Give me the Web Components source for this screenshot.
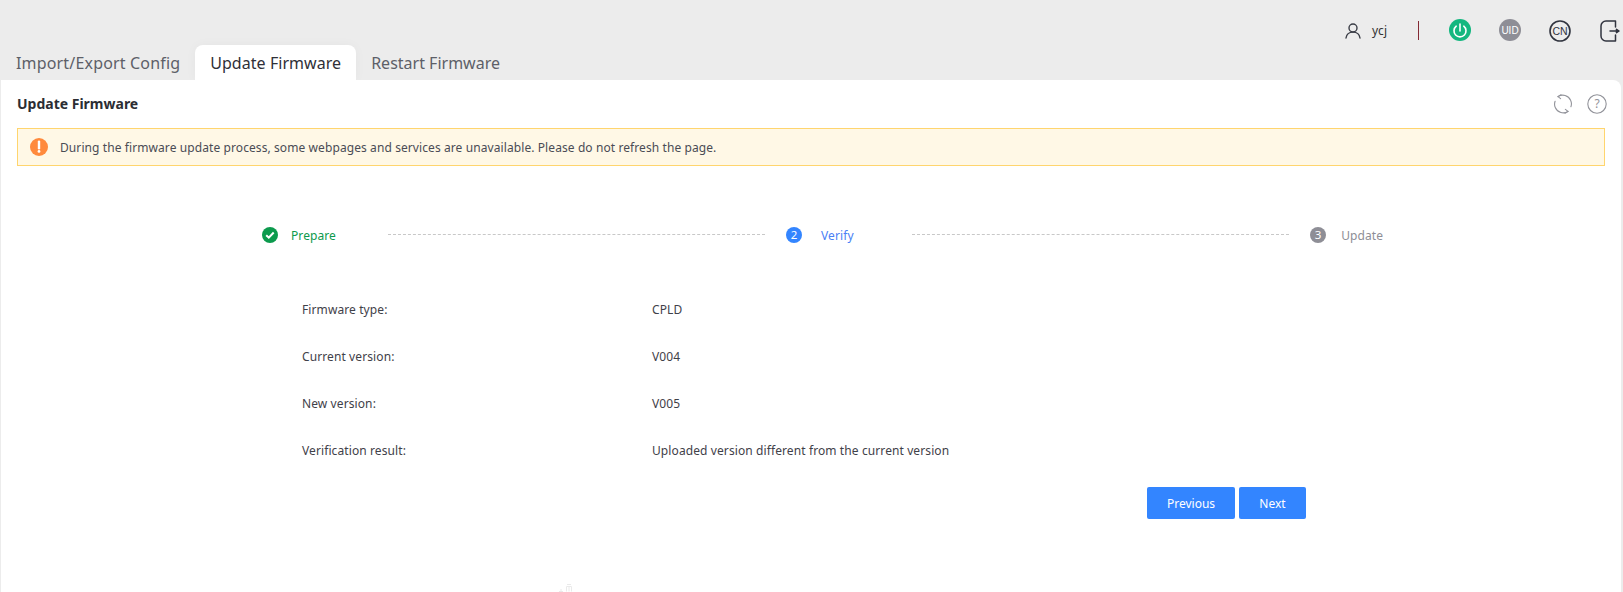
<!DOCTYPE html>
<html lang="en"><head><meta charset="utf-8"><title>Update Firmware</title>
<style>
html,body{margin:0;height:100%;overflow:hidden;background:#ececec}
body{font-family:"Noto Sans","Noto Sans CJK SC",sans-serif;font-size:12px;color:#333}
</style></head><body>
<fw-app>
  <fw-topbar slot="top" user="ycj"></fw-topbar>
  <fw-tabs slot="tabs">
    <fw-tab style="letter-spacing:.17px">Import/Export Config</fw-tab>
    <fw-tab active style="letter-spacing:.05px">Update Firmware</fw-tab>
    <fw-tab style="letter-spacing:0">Restart Firmware</fw-tab>
  </fw-tabs>
  <fw-card title="Update Firmware" slot="card">
    <fw-alert>During the firmware update process, some webpages and services are unavailable. Please do not refresh the page.</fw-alert>
    <fw-stepper>
      <fw-step state="done">Prepare</fw-step>
      <fw-step state="active" num="2">Verify</fw-step>
      <fw-step state="todo" num="3">Update</fw-step>
    </fw-stepper>
    <fw-info>
      <fw-row label="Firmware type:">CPLD</fw-row>
      <fw-row label="Current version:">V004</fw-row>
      <fw-row label="New version:">V005</fw-row>
      <fw-row label="Verification result:">Uploaded version different from the current version</fw-row>
    </fw-info>
    <fw-actions>
      <fw-btn style="width:88px">Previous</fw-btn>
      <fw-btn style="width:67px">Next</fw-btn>
    </fw-actions>
  </fw-card>
</fw-app>
<script>
function def(name,html){
  customElements.define(name,class extends HTMLElement{
    connectedCallback(){
      if(this.shadowRoot)return;
      const r=this.attachShadow({mode:"open"});
      r.innerHTML=typeof html==="function"?html(this):html;
    }
  });
}
def("fw-app",`<style>:host{display:flex;flex-direction:column;height:592px;width:1623px;overflow:hidden}
::slotted([slot=card]){flex:1}</style><slot name="top"></slot><slot name="tabs"></slot><slot name="card"></slot>`);

def("fw-topbar",h=>`<style>
:host{display:flex;height:45px;box-sizing:border-box;align-items:flex-start;justify-content:flex-end;padding:19px 0 0}
.i{display:flex;align-items:center;height:22px}
svg{display:block}
.name{margin-left:11px;font-size:12px;color:#333;width:17px}
.sep{width:1px;height:19px;background:#842a34;margin:0 30px 0 29px}
</style>
<div class="i"><svg width="16" height="16" viewBox="0 0 16 16" fill="none" stroke="#3a3d46" stroke-width="1.4" stroke-linecap="round" style="margin-top:2px"><circle cx="8" cy="5" r="4"/><path d="M1 15c.5-3.600 3-5.900 7-5.900s6.500 2.300 7 5.900"/></svg>
<span class="name">${h.getAttribute("user")}</span></div>
<div class="i"><span class="sep"></span></div>
<div class="i"><svg width="22" height="22" viewBox="0 0 22 22" fill="none"><circle cx="11" cy="11" r="11" fill="#13b77f"/><path d="M11 5v7" stroke="#fff" stroke-width="1.6" stroke-linecap="round"/><path d="M7.200 7.200a6 6 0 1 0 7.600 0" stroke="#fff" stroke-width="1.600" stroke-linecap="round"/></svg></div>
<div class="i" style="margin-left:28px"><svg width="22" height="22" viewBox="0 0 22 22"><circle cx="11" cy="11" r="11" fill="#8e8e96"/><text x="11" y="14.600" text-anchor="middle" font-family="Liberation Sans,sans-serif" font-size="10" fill="#fff">UID</text></svg></div>
<div class="i" style="margin-left:28px"><svg width="22" height="22" viewBox="0 0 22 22" style="margin-top:1px"><circle cx="11" cy="11" r="10" fill="none" stroke="#31343f" stroke-width="1.600"/><text x="11" y="14.600" text-anchor="middle" font-family="Liberation Sans,sans-serif" font-size="10.500" fill="#31343f">CN</text></svg></div>
<div class="i" style="margin:0 3px 0 29px"><svg width="20" height="22" viewBox="0 0 20 22" fill="none" stroke="#31343f" stroke-width="1.500" stroke-linecap="round" stroke-linejoin="round" style="margin-top:1px"><path d="M15.500 7V1H6A5 5 0 0 0 1 6v10a5 5 0 0 0 5 5h9.500v-6"/><path d="M10 11h8"/><path d="M16.500 9.300 19 11l-2.500 1.700z" fill="#31343f"/></svg></div>`);

def("fw-tabs",`<style>:host{display:flex;height:35px;padding-left:1px;align-items:stretch}</style><slot></slot>`);
def("fw-tab",h=>`<style>
:host{display:block;box-sizing:border-box;padding:1px 15px 0;font-size:16px;line-height:35px;color:#5d5f68;white-space:nowrap}
:host([active]){background:#fff;color:#2f3038;border-radius:8px 8px 0 0;box-shadow:0 0 12px rgba(0,0,0,.035)}
</style><slot></slot>`);

def("fw-card",h=>`<style>
:host{display:block;position:relative;background:#fff;margin:0 2px 0 1px;border-radius:0 8px 0 0;box-sizing:border-box;padding:0 16px 0 16px}
.head{display:flex;align-items:center;justify-content:space-between;height:46px;margin-bottom:2px}
h2{margin:0;font-size:14px;font-weight:700;color:#2b2d33}
.tools{display:flex;gap:14px;align-items:center;margin:2px -2px 0 0}
svg{display:block}
.mark{position:absolute;left:557px;bottom:0}
</style>
<div class="head"><h2>${h.getAttribute("title")}</h2>
<div class="tools">
<svg width="20" height="20" viewBox="0 0 20 20" fill="none" stroke="#92939a" stroke-width="1.100" stroke-linecap="round"><path d="M5 2.600A8.500 8.500 0 0 1 17.600 6.200a8.500 8.500 0 0 1 .3 6.600"/><path d="M15 17.400A8.500 8.500 0 0 1 2.400 13.800a8.500 8.500 0 0 1-.3-6.600"/><path d="M8 .6 5 2.600l2.600 2"/><path d="M12 19.400l3-2-2.600-2"/></svg>
<svg width="20" height="20" viewBox="0 0 20 20"><circle cx="10" cy="10" r="9.200" fill="none" stroke="#92939a" stroke-width="1.100"/><text x="10" y="14" text-anchor="middle" font-family="Noto Sans,sans-serif" font-size="12" fill="#92939a">?</text></svg>
</div></div><slot></slot>
<svg class="mark" width="16" height="9" viewBox="0 0 16 9" fill="none" stroke="#eaeaea"><path d="M1 8.500h4M3 6v3M8.500 8.500V3.500h5v5M9 1.500h4M11 3.500v5"/></svg>`);

def("fw-alert",`<style>
:host{display:flex;align-items:center;height:38px;box-sizing:border-box;border:1px solid #ffd56e;background:#fff8e6;padding:1px 0 0 12px;font-size:12px;letter-spacing:.09px;color:#4a4c55}
svg{display:block;margin:-1px 12px 0 0;flex:none}
</style><svg width="18" height="18" viewBox="0 0 18 18"><circle cx="9" cy="9" r="9" fill="#ff8a3d"/><path d="M9 3.600v6.600" stroke="#fff" stroke-width="2.400" stroke-linecap="round"/><circle cx="9" cy="13.400" r="1.400" fill="#fff"/></svg><span><slot></slot></span>`);

def("fw-stepper",`<style>:host{display:flex;align-items:center;height:20px;margin:59px 0 0;padding-left:245px;padding-right:222px}
::slotted(fw-step:not(:last-child)){flex:1}
</style><slot></slot>`);
def("fw-step",h=>{
  const s=h.getAttribute("state"),n=h.getAttribute("num");
  const col={done:"#0c9a4d",active:"#3385ff",todo:"#8e8e96"}[s];
  const tc={done:"#0c9a4d",active:"#4a80f5",todo:"#8e8e96"}[s];
  const ic=s==="done"
   ?`<svg width="16" height="16" viewBox="0 0 16 16"><circle cx="8" cy="8" r="8" fill="${col}"/><path d="M4.200 8.200l2.600 2.500 4.900-5.200" fill="none" stroke="#fff" stroke-width="2"/></svg>`
   :`<svg width="16" height="16" viewBox="0 0 16 16"><circle cx="8" cy="8" r="8" fill="${col}"/><text x="8" y="12" text-anchor="middle" font-family="Noto Sans,sans-serif" font-size="11.500" fill="#fff">${n}</text></svg>`;
  return `<style>:host{display:flex;align-items:center;font-size:12px;letter-spacing:.08px}
  svg{display:block;flex:none}
  .t{margin-left:${s==="done"?13:s==="active"?19:15}px;color:${tc};white-space:nowrap}
  .l{flex:1;border-top:1px dashed #c8c8c8;margin:-1px 21px 0 ${s==="done"?52:58}px}
  </style>${ic}<span class="t"><slot></slot></span>${s==="todo"?"":'<span class="l"></span>'}`;
});

def("fw-info",`<style>:host{display:block;margin:41px 0 0 285px}</style><slot></slot>`);
def("fw-row",h=>`<style>:host{display:flex;height:47px;align-items:center;font-size:12px;letter-spacing:.1px;color:#3f4149}
.k{width:350px}</style><span class="k">${h.getAttribute("label")}</span><span><slot></slot></span>`);

def("fw-actions",`<style>:host{display:flex;gap:4px;margin:13px 0 0 1130px}</style><slot></slot>`);
def("fw-btn",`<style>:host{display:flex;align-items:center;justify-content:center;height:32px;background:#3385ff;color:#fff;border-radius:2px;font-size:12px}</style><slot></slot>`);
</script>
</body></html>
